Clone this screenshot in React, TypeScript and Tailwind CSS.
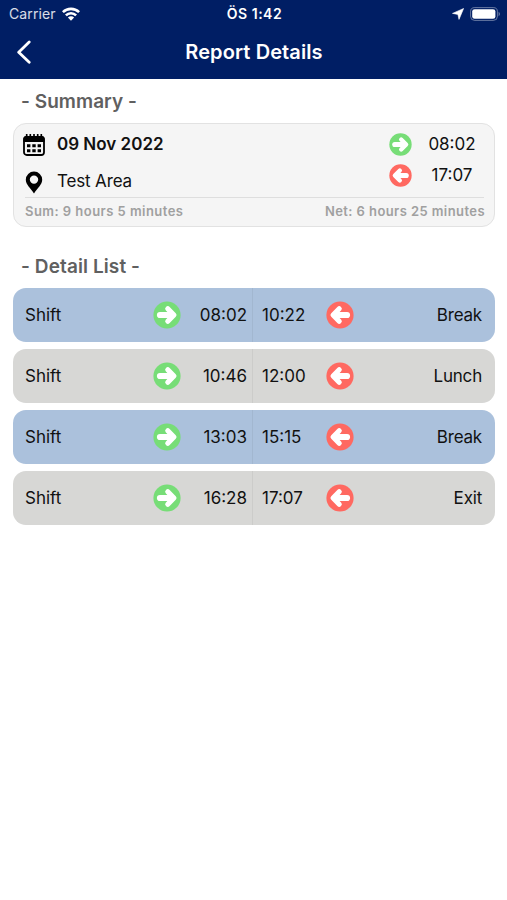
import { clsx } from "clsx";

interface ArrowBadgeProps {
  direction: "in" | "out";
  className?: string;
}

function ArrowBadge({ direction, className }: ArrowBadgeProps) {
  const isIn = direction === "in";

  return (
    <svg viewBox="0 0 28 28" className={clsx("shrink-0", className)}>
      <circle cx="14" cy="14" r="13.6" fill={isIn ? "#77dd77" : "#ff6961"} />
      <g
        transform={isIn ? undefined : "rotate(180 14 14)"}
        fill="#fff"
        stroke="#fff"
        strokeLinecap="round"
        strokeLinejoin="round"
      >
        <path d="M7 14H18" strokeWidth="6.2" />
        <path d="M14.8 7.8L20.9 14L14.8 20.2" strokeWidth="5.2" />
      </g>
    </svg>
  );
}

function WifiIcon() {
  return (
    <svg viewBox="0 0 18 14" className="h-[14px] w-[18px]" fill="none" stroke="#fff" strokeWidth="2.6">
      <path d="M0.9 5.2a11.5 11.5 0 0 1 16.2 0" />
      <path d="M3.9 8.4a7.2 7.2 0 0 1 10.2 0" />
      <path d="M9 13.8L5.9 10.6a4.4 4.4 0 0 1 6.2 0Z" fill="#fff" stroke="none" />
    </svg>
  );
}

function BatteryIcon() {
  return (
    <svg viewBox="0 0 30 14" className="h-[14px] w-[30px]">
      <rect x="0.6" y="0.6" width="26.8" height="12.8" rx="4" fill="none" stroke="#fff" strokeOpacity="0.4" />
      <rect x="2.2" y="2.2" width="23.2" height="9.6" rx="2.4" fill="#fff" />
      <path d="M28.6 4.8c1.6.8 1.6 3.6 0 4.4Z" fill="#fff" fillOpacity="0.45" />
    </svg>
  );
}

function CalendarIcon() {
  return (
    <svg viewBox="0 0 22 22" className="h-[22px] w-[22px]">
      <path d="M3.7 0.5v3M7.3 0.5v3M11 0.5v3M14.7 0.5v3M18.3 0.5v3" stroke="#000" strokeWidth="1.7" strokeLinecap="round" />
      <rect x="1" y="3" width="20" height="18" rx="2.8" fill="none" stroke="#000" strokeWidth="1.8" />
      <path d="M0.4 8V5a3 3 0 0 1 3-3h15.2a3 3 0 0 1 3 3v3Z" />
      <path d="M4 10.2h3.4v3H4zM9.3 10.2h3.4v3H9.3zM14.6 10.2H18v3h-3.4zM4 15.2h3.4v3H4zM9.3 15.2h3.4v3H9.3zM14.6 15.2H18v3h-3.4z" />
    </svg>
  );
}

function PinIcon() {
  return (
    <svg viewBox="0 0 18 23" className="h-[23px] w-[18px]">
      <path
        fillRule="evenodd"
        d="M9 0.5a8.2 8.2 0 0 0-8.2 8.2C0.8 13.6 5.6 17 9 22.5c3.4-5.5 8.2-8.9 8.2-13.8A8.2 8.2 0 0 0 9 0.5Zm0 3.9a4.2 4.2 0 1 1 0 8.4a4.2 4.2 0 0 1 0-8.4Z"
      />
    </svg>
  );
}

function Header() {
  return (
    <header className="h-[79px] bg-[#001e64] text-white">
      <div className="grid h-[27px] grid-cols-3 items-center pr-[7px] pl-[9px] text-[14px]">
        <div className="flex items-center gap-[6px] text-white/85">
          <span className="tracking-[0.1px]">Carrier</span>
          <WifiIcon />
        </div>
        <span className="text-center font-semibold tracking-[0.5px]">ÖS 1:42</span>
        <div className="flex items-center justify-end gap-[6px]">
          <svg viewBox="0 0 12 12" className="h-3 w-3" fill="#fff" stroke="#fff" strokeWidth="0.6" strokeLinejoin="round">
            <path d="M11.6 0.5L7 11.4L5.9 6.4L0.5 5.4Z" />
          </svg>
          <BatteryIcon />
        </div>
      </div>
      <div className="grid h-[50px] grid-cols-[60px_1fr_59px] items-center">
        <button aria-label="Back" className="pl-4">
          <svg viewBox="0 0 16 24" className="h-6 w-4" fill="none" stroke="#fff" strokeWidth="2.8" strokeLinecap="round" strokeLinejoin="round">
            <path d="M13.2 1.9L2.7 12.2L13.2 22.3" />
          </svg>
        </button>
        <h1 className="text-center text-[20px] font-semibold tracking-[0.1px]">Report Details</h1>
      </div>
    </header>
  );
}

function Summary() {
  return (
    <section className="mr-[12px] ml-[13px] h-[104px] rounded-[13px] border border-[#e2e2e2] bg-[#f5f5f5] pt-[5px] pr-[10px] pl-[11px]">
      <div className="flex h-[69px] justify-between border-b border-[#dedede]">
        <div>
          <div className="flex h-8 items-center">
            <div className="-ml-[2px] flex w-[22px] justify-center">
              <CalendarIcon />
            </div>
            <span className="ml-3 text-[17px] font-semibold">09 Nov 2022</span>
          </div>
          <div className="mt-[5px] flex h-8 items-center">
            <div className="-ml-[2px] flex w-[22px] justify-center">
              <PinIcon />
            </div>
            <span className="ml-3 text-[17px] tracking-[-0.15px]">Test Area</span>
          </div>
        </div>
        <div className="-mt-px -mr-2">
          <div className="flex h-8 items-center">
            <ArrowBadge direction="in" className="h-[23px] w-[23px]" />
            <span className="w-20 pt-px text-center text-[17px]">08:02</span>
          </div>
          <div className="flex h-[31px] items-center">
            <ArrowBadge direction="out" className="h-[23px] w-[23px]" />
            <span className="w-20 text-center text-[17px]">17:07</span>
          </div>
        </div>
      </div>
      <div className="flex h-7 items-center justify-between text-[13px] font-semibold text-[#a0a0a0]">
        <span className="tracking-[0.46px]">Sum: 9 hours 5 minutes</span>
        <span className="-mr-px tracking-[0.42px]">Net: 6 hours 25 minutes</span>
      </div>
    </section>
  );
}

interface Entry {
  start: string;
  end: string;
  reason: string;
}

const entries: Entry[] = [
  { start: "08:02", end: "10:22", reason: "Break" },
  { start: "10:46", end: "12:00", reason: "Lunch" },
  { start: "13:03", end: "15:15", reason: "Break" },
  { start: "16:28", end: "17:07", reason: "Exit" },
];

function DetailRow({ entry, isEven }: { entry: Entry; isEven: boolean }) {
  return (
    <li
      className={clsx(
        "flex h-[54px] rounded-[13px] text-[17px]",
        isEven ? "bg-[#abc1dc]" : "bg-[#d7d7d5]"
      )}
    >
      <div className="flex w-60 items-center border-r border-black/5 pr-[5px] pl-3">
        <span className="flex-1 pt-px">Shift</span>
        <ArrowBadge direction="in" className="h-7 w-7" />
        <span className="w-[66px] pt-px text-right">{entry.start}</span>
      </div>
      <div className="flex flex-1 items-center pr-[13px] pl-[9px]">
        <span className="w-16 pt-px">{entry.end}</span>
        <ArrowBadge direction="out" className="h-7 w-7" />
        <span className="flex-1 pt-px text-right tracking-[-0.2px]">{entry.reason}</span>
      </div>
    </li>
  );
}

export default function App() {
  return (
    <div className="h-[900px] w-full bg-white font-[Inter,sans-serif] text-[#111]">
      <Header />
      <main>
        <h2 className="flex h-11 items-center pt-[2px] pl-[21px] text-[19px] font-semibold tracking-[0.05px] text-[#606060]">- Summary -</h2>
        <Summary />
        <h2 className="mt-[17px] flex h-11 items-center pt-[2px] pl-[21px] text-[19px] font-semibold tracking-[0.1px] text-[#606060]">- Detail List -</h2>
        <ul className="mr-[12px] ml-[13px] flex flex-col gap-[7px]">
          {entries.map((entry, i) => (
            <DetailRow key={entry.start} entry={entry} isEven={i % 2 === 0} />
          ))}
        </ul>
      </main>
    </div>
  );
}
